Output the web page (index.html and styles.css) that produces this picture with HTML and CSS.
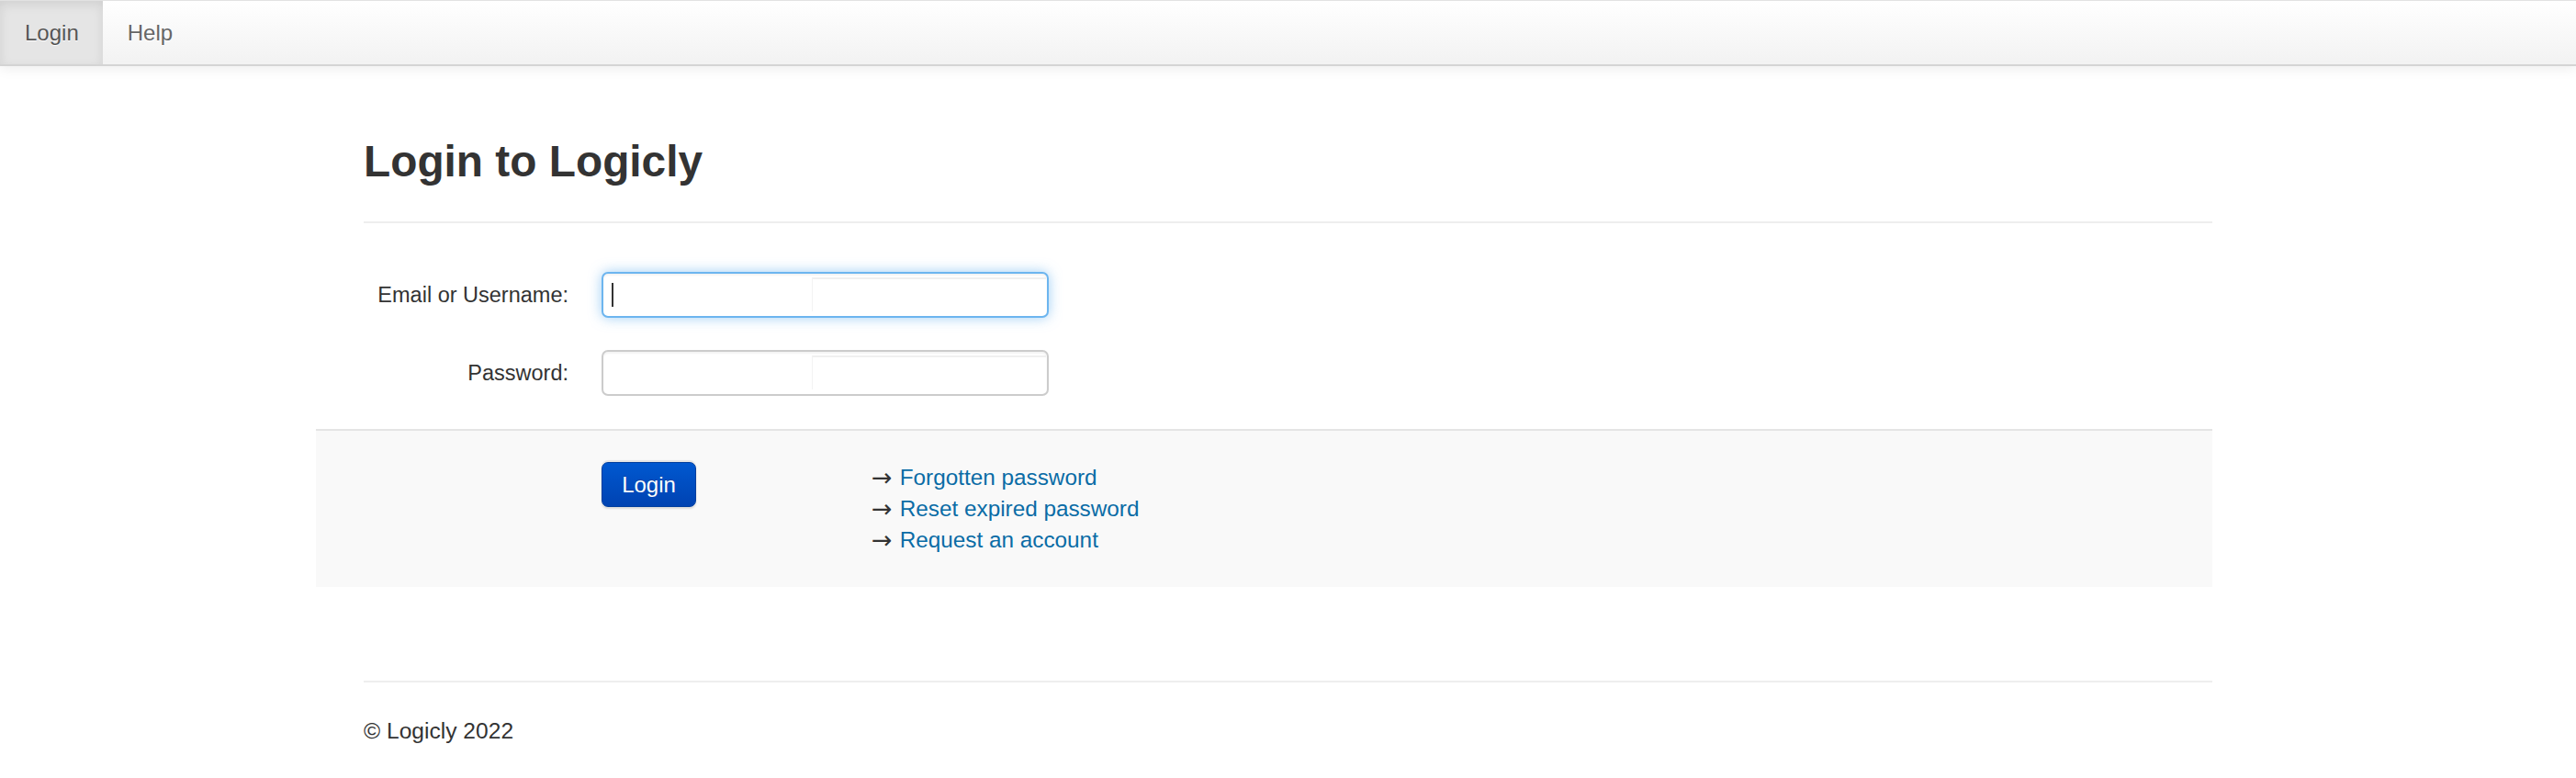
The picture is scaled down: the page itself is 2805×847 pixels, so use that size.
FILE: index.html
```html
<!DOCTYPE html>
<html lang="en">
<head>
<meta charset="utf-8">
<title>Login to Logicly</title>
<link rel="stylesheet" href="styles.css">
</head>
<body>
<nav class="navbar">
  <ul class="nav">
    <li class="nav-item active"><a class="nav-link" href="#">Login</a></li>
    <li class="nav-item"><a class="nav-link" href="#">Help</a></li>
  </ul>
</nav>
<main class="container">
  <h1 class="page-title">Login to Logicly</h1>
  <hr class="rule">
  <form class="login-form">
    <div class="field">
      <label class="field-label" for="user">Email or Username:</label>
      <div class="input-wrap">
        <input class="text-input is-focused" id="user" type="text">
        <span class="caret"></span>
        <span class="artifact"></span>
      </div>
    </div>
    <div class="field">
      <label class="field-label" for="pass">Password:</label>
      <div class="input-wrap">
        <input class="text-input" id="pass" type="password">
        <span class="artifact"></span>
      </div>
    </div>
    <div class="form-actions">
      <button class="btn-primary" type="button">Login</button>
      <ul class="links">
        <li class="link-row"><span class="arrow">&rarr;</span> <a class="link" href="#">Forgotten password</a></li>
        <li class="link-row"><span class="arrow">&rarr;</span> <a class="link" href="#">Reset expired password</a></li>
        <li class="link-row"><span class="arrow">&rarr;</span> <a class="link" href="#">Request an account</a></li>
      </ul>
    </div>
  </form>
  <hr class="rule footer-rule">
  <footer class="footer">&copy; Logicly 2022</footer>
</main>
</body>
</html>
```
FILE: styles.css
```css
html, body {
  margin: 0;
  padding: 0;
  background: #ffffff;
}

body {
  font-family: "Liberation Sans", Arial, Helvetica, sans-serif;
  font-size: 23.5px;
  color: #333333;
}

.navbar {
  height: 69px;
  border-top: 1px solid #e2e2e2;
  border-bottom: 2px solid #d4d4d4;
  background: linear-gradient(#ffffff, #f2f2f2);
  box-shadow: 0 2px 14px rgba(0, 0, 0, 0.08);
}

.nav {
  display: flex;
  margin: 0;
  padding: 0;
  list-style: none;
  height: 100%;
}

.nav-item {
  height: 100%;
}

.nav-link {
  display: block;
  padding: 0 26px 0 27px;
  line-height: 69px;
  font-size: 24px;
  color: #666666;
  text-decoration: none;
  text-shadow: 0 1px 0 #ffffff;
}

.nav-item.active .nav-link {
  color: #555555;
  background: #e5e5e5;
  box-shadow: inset 0 4px 12px rgba(0, 0, 0, 0.09);
}

.container {
  width: 2013px;
  margin: 0 auto;
}

.page-title {
  margin: 78px 0 0;
  font-size: 47.8px;
  line-height: 52px;
  font-weight: bold;
  color: #333333;
}

.rule {
  margin: 39px 0 0;
  height: 0;
  border: 0;
  border-top: 2px solid #eeeeee;
}

.login-form {
  margin-top: 53px;
}

.field {
  display: flex;
  align-items: center;
  height: 50px;
  margin-bottom: 35px;
}

.field-label {
  width: 223px;
  margin-right: 36px;
  text-align: right;
  color: #333333;
}

.input-wrap {
  position: relative;
  width: 487px;
  height: 50px;
}

.text-input {
  display: block;
  box-sizing: border-box;
  width: 100%;
  height: 100%;
  margin: 0;
  padding: 0 12px;
  border: 2px solid #cccccc;
  border-radius: 7px;
  background: #ffffff;
  font: inherit;
  color: #333333;
  box-shadow: inset 0 2px 2px rgba(0, 0, 0, 0.05);
  outline: none;
}

.text-input.is-focused {
  border-color: rgba(82, 168, 236, 0.85);
  box-shadow: inset 0 2px 2px rgba(0, 0, 0, 0.05), 0 0 14px rgba(82, 168, 236, 0.55);
}

.caret {
  position: absolute;
  left: 11px;
  top: 12px;
  width: 2px;
  height: 26px;
  background: #333333;
}

.artifact {
  position: absolute;
  left: 229px;
  top: 6px;
  right: 3px;
  bottom: 7px;
  border-top: 2px solid #f0f0f0;
  border-left: 1px solid #f3f3f3;
  pointer-events: none;
}

.form-actions {
  display: flex;
  align-items: flex-start;
  margin: 36px 0 0 -52px;
  padding: 34px 0 34px 311px;
  border-top: 2px solid #e5e5e5;
  background: #f9f9f9;
}

.btn-primary {
  width: 103px;
  height: 49px;
  padding: 0;
  border: 1px solid #003e9e;
  border-radius: 7px;
  background: linear-gradient(#0058d0, #0043b2);
  color: #ffffff;
  font: inherit;
  font-size: 24px;
  text-shadow: 0 -1px 0 rgba(0, 0, 0, 0.2);
  box-shadow: 0 -2px 1px rgba(0, 0, 0, 0.08), 0 2px 2px rgba(0, 0, 0, 0.12);
  cursor: pointer;
}

.links {
  margin: 0 0 0 191px;
  padding: 0;
  list-style: none;
  font-size: 24.3px;
  line-height: 34px;
}

.arrow {
  display: inline-block;
  width: 24px;
  font-family: "DejaVu Sans", sans-serif;
  font-size: 27px;
  line-height: 34px;
  vertical-align: top;
  color: #333333;
}

.link {
  color: #0a6ca6;
  text-decoration: none;
}

.footer-rule {
  margin-top: 102px;
}

.footer {
  margin-top: 36px;
  line-height: 34px;
  font-size: 24.6px;
  color: #333333;
}
```
